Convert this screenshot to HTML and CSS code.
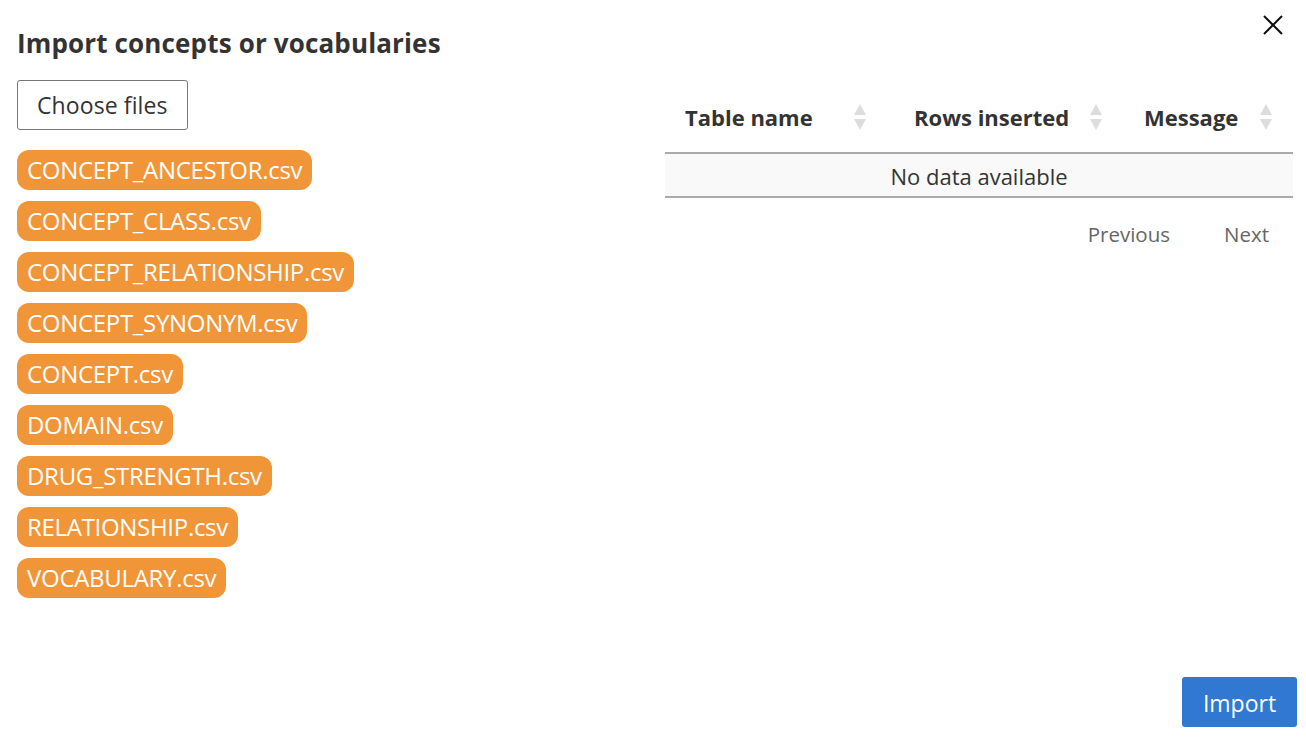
FILE: index.html
```html
<!DOCTYPE html>
<html lang="en">
<head>
  <meta charset="UTF-8" />
  <title>Import concepts or vocabularies</title>
  <link rel="stylesheet" href="styles.css">
</head>
<body>
  <div class="modal">
    <button class="close" title="Close">
      <svg width="22" height="22" viewBox="0 0 22 22"><path d="M2 2 L20 20 M20 2 L2 20" stroke="#111" stroke-width="2" fill="none"/></svg>
    </button>
    <h1 class="title">Import concepts or vocabularies</h1>

    <div class="columns">
      <div class="left">
        <button class="choose">Choose files</button>
        <div class="files">
          <span class="file">CONCEPT_ANCESTOR.csv</span>
          <span class="file">CONCEPT_CLASS.csv</span>
          <span class="file">CONCEPT_RELATIONSHIP.csv</span>
          <span class="file">CONCEPT_SYNONYM.csv</span>
          <span class="file">CONCEPT.csv</span>
          <span class="file">DOMAIN.csv</span>
          <span class="file">DRUG_STRENGTH.csv</span>
          <span class="file">RELATIONSHIP.csv</span>
          <span class="file">VOCABULARY.csv</span>
        </div>
      </div>

      <div class="right">
        <table class="results">
          <thead>
            <tr>
              <th class="c1">Table name<span class="sort"></span></th>
              <th class="c2">Rows inserted<span class="sort"></span></th>
              <th class="c3">Message<span class="sort"></span></th>
            </tr>
          </thead>
          <tbody>
            <tr><td colspan="3" class="empty">No data available</td></tr>
          </tbody>
        </table>
        <div class="pager">
          <span>Previous</span>
          <span>Next</span>
        </div>
      </div>
    </div>

    <div class="footer">
      <button class="import">Import</button>
    </div>
  </div>
</body>
</html>
```

FILE: styles.css
```css
html, body {
  margin: 0;
  padding: 0;
  background: #fff;
  color: #333;
  font-family: 'Open Sans', 'Noto Sans', sans-serif;
}

.modal {
  position: relative;
  height: 738px;
  box-sizing: border-box;
  padding: 23px 9px 11px 17px;
  display: flex;
  flex-direction: column;
}

.close {
  position: absolute;
  top: 14px;
  right: 22px;
  border: none;
  background: none;
  padding: 0;
  cursor: pointer;
}

.title {
  margin: 0;
  font-size: 26px;
  font-weight: 700;
  line-height: 40px;
  color: #333;
  letter-spacing: 0.15px;
}

.columns {
  display: grid;
  grid-template-columns: 648px 628px;
  margin-top: 17px;
  flex: 1;
}

.choose {
  font-family: inherit;
  font-size: 23px;
  color: #333;
  background: #fff;
  border: 1px solid #777;
  border-radius: 3px;
  height: 50px;
  padding: 0 19px;
  letter-spacing: 0.1px;
}

.files {
  display: flex;
  flex-direction: column;
  align-items: flex-start;
  gap: 11px;
  margin-top: 20px;
}

.file {
  background: #f19539;
  color: #fff;
  font-size: 24px;
  line-height: 40px;
  height: 40px;
  padding: 0 10px;
  border-radius: 12px;
  letter-spacing: -0.3px;
}

.right {
  padding-top: 16px;
}

.results {
  width: 100%;
  border-collapse: collapse;
  table-layout: fixed;
}

.results th {
  position: relative;
  box-sizing: border-box;
  text-align: left;
  font-size: 22px;
  font-weight: 700;
  height: 57px;
  padding: 0 20px 14px;
  border-bottom: 2px solid #aaa;
  white-space: nowrap;
}

.c1 { width: 229px; }
.c2 { width: 230px; }

.sort {
  position: absolute;
  top: 50%;
  width: 12px;
  height: 30px;
  margin-top: -22px;
}

.c1 .sort { right: 28px; }
.c2 .sort { right: 22px; }
.c3 .sort { right: 21px; }

.sort::before, .sort::after {
  content: "";
  position: absolute;
  left: 0;
  border-left: 6px solid transparent;
  border-right: 6px solid transparent;
}

.sort::before {
  top: 2px;
  border-bottom: 11px solid #ddd;
}

.sort::after {
  bottom: 2px;
  border-top: 11px solid #ddd;
}

.results td.empty {
  text-align: center;
  font-size: 22px;
  height: 44px;
  padding: 2px 0 0;
  box-sizing: border-box;
  background: #f9f9f9;
  border-bottom: 2px solid #aaa;
}

.pager {
  display: flex;
  justify-content: flex-end;
  gap: 54px;
  padding: 22px 24px 0 0;
  font-size: 20.5px;
  color: #666;
}

.footer {
  display: flex;
  justify-content: flex-end;
}

.import {
  font-family: inherit;
  font-size: 23px;
  color: #fff;
  background: #3178d2;
  border: none;
  border-radius: 3px;
  height: 50px;
  width: 115px;
  padding: 2px 0 0;
}
```
